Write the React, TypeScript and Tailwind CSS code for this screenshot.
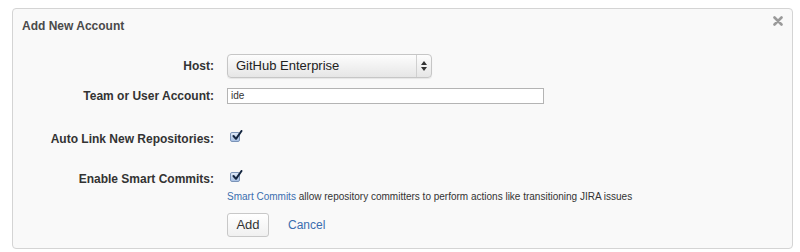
import React from "react";

function Check() {
  return (
    <span className="relative inline-block w-[10px] h-[10px] rounded-[2px] border border-[#7b94b8] bg-gradient-to-b from-[#dfe9f7] to-[#a9c1e3]">
      <svg className="absolute -top-[3px] left-[1px]" width="11" height="11" viewBox="0 0 11 11">
        <path d="M1.5 6 L4 8.8 L9.5 1" stroke="#142640" strokeWidth="2" fill="none" strokeLinecap="round" strokeLinejoin="round" />
      </svg>
    </span>
  );
}

export default function App() {
  return (
    <div className="w-[800px] h-[252px] bg-white pt-[8px] pl-[12px] pr-[7px] font-['Liberation_Sans',Arial,sans-serif] text-[#333]">
      <div className="relative h-[241px] rounded-[4px] border border-[#d4d4d4] bg-[#f9f9f9]">
        <div className="pl-[9px] pt-[10px] text-[12px] leading-[14px] font-bold text-[#4a4a4a]">Add New Account</div>
        <svg className="absolute right-[9px] top-[7px]" width="10" height="10" viewBox="0 0 10 10">
          <path d="M1.5 1.5 L8.5 8.5 M8.5 1.5 L1.5 8.5" stroke="#9a9a9a" strokeWidth="2.6" strokeLinecap="round" />
        </svg>

        <div className="mt-[21px] flex items-center h-[24px]">
          <label className="w-[201px] text-right text-[12px] font-bold text-[#333]">Host:</label>
          <div className="ml-[13px] flex h-[24px] w-[205px] items-center rounded-[4px] border border-[#c6c6c6] bg-gradient-to-b from-[#fdfdfd] to-[#e6e6e6] shadow-[0_1px_1px_rgba(0,0,0,0.08)]">
            <span className="flex-1 pl-[8px] text-[13px] text-[#222]">GitHub Enterprise</span>
            <span className="flex h-full w-[15px] flex-col items-center justify-center gap-[2px] border-l border-[#d0d0d0]">
              <svg width="6" height="4" viewBox="0 0 6 4"><path d="M0 4 L3 0 L6 4Z" fill="#333" /></svg>
              <svg width="6" height="4" viewBox="0 0 6 4"><path d="M0 0 L3 4 L6 0Z" fill="#333" /></svg>
            </span>
          </div>
        </div>

        <div className="mt-[10px] flex items-center h-[16px]">
          <label className="w-[201px] text-right text-[12px] font-bold text-[#333]">Team or User Account:</label>
          <div className="ml-[13px] h-[16px] w-[317px] border border-[#b4b4b4] bg-white pl-[3px] text-[10px] leading-[14px] text-[#333]">ide</div>
        </div>

        <div className="mt-[27px] flex items-center h-[16px]">
          <label className="w-[201px] text-right text-[12px] font-bold text-[#333]">Auto Link New Repositories:</label>
          <span className="ml-[16px] flex -mt-[4px]"><Check /></span>
        </div>

        <div className="mt-[24px] flex items-center h-[16px]">
          <label className="w-[201px] text-right text-[12px] font-bold text-[#333]">Enable Smart Commits:</label>
          <span className="ml-[16px] flex -mt-[4px]"><Check /></span>
        </div>

        <div className="ml-[214px] mt-[3px] text-[10px] leading-[14px] text-[#333]">
          <a className="text-[#3b6eaf]">Smart Commits</a> allow repository committers to perform actions like transitioning JIRA issues
        </div>

        <div className="ml-[214px] mt-[9px] flex items-center">
          <button className="h-[24px] w-[42px] rounded-[3px] border border-[#c8c8c8] bg-gradient-to-b from-white to-[#f0f0f0] text-[13px] text-[#333]">Add</button>
          <a className="ml-[19px] text-[12px] text-[#3b6eaf]">Cancel</a>
        </div>
      </div>
    </div>
  );
}
